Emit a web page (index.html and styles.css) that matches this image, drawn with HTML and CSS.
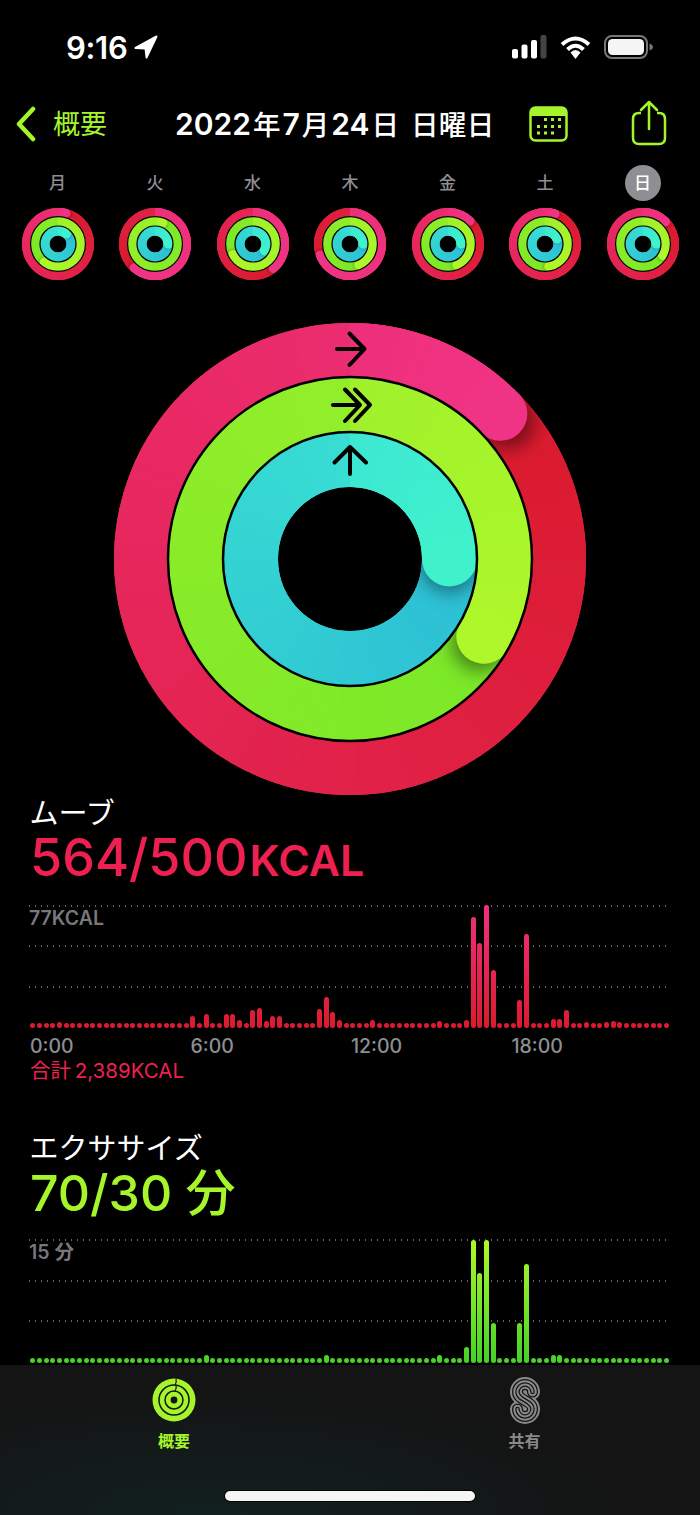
FILE: index.html
```html
<!DOCTYPE html>
<html lang="ja">
<head>
    <meta charset="utf-8">
    <title>アクティビティ</title>
    <link rel="stylesheet" href="styles.css">
</head>
<body>
    <div class="status-bar">
        <span class="time">9:16</span>
        <svg class="location" width="24" height="24" viewBox="0 0 24 24"><path d="M22.500 1.500 L1.500 13 L11.500 13.500 L12.500 22.500 Z"/></svg>
        <div class="status-icons">
            <svg width="35" height="24" viewBox="0 0 35 24">
                <rect x="0" y="14" width="6" height="9.500" rx="2" fill="#fff"/>
                <rect x="9.500" y="9.500" width="6" height="14" rx="2" fill="#fff"/>
                <rect x="19" y="5" width="6" height="18.500" rx="2" fill="#fff"/>
                <rect x="28.500" y="0" width="6" height="23.500" rx="2" fill="#444"/>
            </svg>
            <svg width="31" height="24" viewBox="0 0 31 24">
                <path d="M2 9.500 Q15.500 -2.500 29 9.500" fill="none" stroke="#fff" stroke-width="4"/>
                <path d="M7.500 14.500 Q15.500 7 23.500 14.500" fill="none" stroke="#fff" stroke-width="4"/>
                <path d="M10.500 17.500 Q15.500 12.500 20.500 17.500 L15.500 24 Z" fill="#fff"/>
            </svg>
            <svg width="49" height="24" viewBox="0 0 49 24">
                <rect x="1" y="1" width="42" height="22" rx="7" fill="none" stroke="#777" stroke-width="2"/>
                <rect x="4" y="4" width="36" height="16" rx="4.500" fill="#f5f5f5"/>
                <path d="M45.500 8.500 Q49 10 49 12 Q49 14 45.500 15.500 Z" fill="#777"/>
            </svg>
        </div>
    </div>

    <div class="nav-bar">
        <svg class="back-icon" width="20" height="36" viewBox="0 0 20 36"><path d="M17 3 L3 18 L17 33" fill="none" stroke="#a6f52b" stroke-width="4.500" stroke-linecap="round" stroke-linejoin="round"/></svg>
        <span class="back-label">概要</span>
        <span class="nav-title">2022<b>年</b>7<b>月</b>24<b>日</b><b class="weekday">日曜日</b></span>
        <svg class="calendar-icon" width="39" height="36" viewBox="0 0 39 36">
            <rect x="1.500" y="1.500" width="36" height="33" rx="5" fill="none" stroke="#a6f52b" stroke-width="2.500"/>
            <path d="M1.500 10 V6 Q1.500 1.500 6 1.500 H33 Q37.500 1.500 37.500 6 V10 Z" fill="#a6f52b"/>
            <g fill="#a6f52b">
                <rect x="15" y="12" width="3" height="3"/><rect x="22" y="12" width="3" height="3"/><rect x="29" y="12" width="3" height="3"/>
                <rect x="8" y="19" width="3" height="3"/><rect x="15" y="19" width="3" height="3"/><rect x="22" y="19" width="3" height="3"/><rect x="29" y="19" width="3" height="3"/>
                <rect x="8" y="25.500" width="3" height="3"/><rect x="15" y="25.500" width="3" height="3"/><rect x="22" y="25.500" width="3" height="3"/>
            </g>
        </svg>
        <svg class="share-icon" width="36" height="46" viewBox="0 0 36 46">
            <path d="M10 13 H8 Q2 13 2 19 V38 Q2 44 8 44 H28 Q34 44 34 38 V19 Q34 13 28 13 H26" fill="none" stroke="#a6f52b" stroke-width="2.500"/>
            <path d="M18 29 V2 M10 10 L18 2 L26 10" fill="none" stroke="#a6f52b" stroke-width="2.500" stroke-linecap="round" stroke-linejoin="round"/>
        </svg>
    </div>

    <div class="week">
        <div class="day"><span class="day-label">月</span><svg class="ring-small" data-ends="15,217,40"></svg></div>
        <div class="day"><span class="day-label">火</span><svg class="ring-small" data-ends="222,20,90"></svg></div>
        <div class="day"><span class="day-label">水</span><svg class="ring-small" data-ends="141,242,120"></svg></div>
        <div class="day"><span class="day-label">木</span><svg class="ring-small" data-ends="250,157,90"></svg></div>
        <div class="day"><span class="day-label">金</span><svg class="ring-small" data-ends="44,157,90"></svg></div>
        <div class="day"><span class="day-label">土</span><svg class="ring-small" data-ends="19,170,67"></svg></div>
        <div class="day"><span class="day-label today">日</span><svg class="ring-small" data-ends="46,120,90"></svg></div>
    </div>

    <div class="hero">
        <svg id="bigRing" class="ring-big" data-ends="46,120,90"></svg>
    </div>

    <section class="metric move">
        <h2>ムーブ</h2>
        <p class="value">564/500<small>KCAL</small></p>
        <div class="plot">
            <div class="grid"><i></i><i></i><i></i></div>
            <span class="plot-max">77KCAL</span>
            <div class="bars" id="moveBars"></div>
        </div>
        <div class="axis"><span>0:00</span><span>6:00</span><span>12:00</span><span>18:00</span></div>
        <p class="total">合計 2,389KCAL</p>
    </section>

    <section class="metric exercise">
        <h2>エクササイズ</h2>
        <p class="value">70/30 分</p>
        <div class="plot">
            <div class="grid"><i></i><i></i><i></i></div>
            <span class="plot-max">15 分</span>
            <div class="bars" id="exerciseBars"></div>
        </div>
    </section>

    <div class="tab-bar">
        <div class="tab active">
            <svg width="44" height="44" viewBox="0 0 44 44">
                <circle cx="22" cy="22" r="21.500" fill="#a6f52b"/>
                <circle cx="22" cy="22" r="15" fill="none" stroke="#141414" stroke-width="1.500"/>
                <circle cx="22" cy="22" r="9" fill="none" stroke="#141414" stroke-width="1.500"/>
                <circle cx="22" cy="22" r="3.400" fill="#141414"/>
                <path d="M24 1 Q25 4 23 7 M24 7.500 Q25 10 23 13" fill="none" stroke="#141414" stroke-width="1.200"/>
            </svg>
            <span>概要</span>
        </div>
        <div class="tab">
            <svg width="30" height="47" viewBox="0 0 30 47">
                <defs>
                    <path id="shareS" d="M22.500 15 A7.500 7.500 0 0 0 7.500 15 C7.500 23.500 22.500 23.500 22.500 32 A7.500 7.500 0 0 1 7.500 32"/>
                </defs>
                <g fill="none" stroke-linecap="round">
                    <use href="#shareS" stroke="#8a8a8a" stroke-width="15"/>
                    <use href="#shareS" stroke="#141414" stroke-width="11"/>
                    <use href="#shareS" stroke="#8a8a8a" stroke-width="8.500"/>
                    <use href="#shareS" stroke="#141414" stroke-width="4.500"/>
                    <use href="#shareS" stroke="#8a8a8a" stroke-width="2"/>
                </g>
            </svg>
            <span>共有</span>
        </div>
        <div class="home-indicator"></div>
    </div>

    <script src="charts.js"></script>
</body>
</html>
```

FILE: styles.css
```css
* {
    box-sizing: border-box;
}

html, body {
    margin: 0;
    height: 1515px;
    overflow: hidden;
}

body {
    position: relative;
    background-color: #000;
    color: #fff;
    font-family: Inter, "Noto Sans CJK JP", sans-serif;
}

.status-bar {
    display: flex;
    align-items: center;
    height: 94px;
    padding-left: 66px;
}

.time {
    font-size: 31px;
    font-weight: 600;
    letter-spacing: -0.3px;
}

.location {
    margin-left: 7px;
    fill: #fff;
    stroke: #fff;
    stroke-width: 2;
    stroke-linejoin: round;
}

.status-icons {
    display: flex;
    align-items: center;
    gap: 13px;
    margin-left: auto;
    padding-right: 47px;
}

.nav-bar {
    display: flex;
    align-items: center;
    height: 60px;
    padding-left: 16px;
}

.back-label {
    margin-left: 17px;
    padding-top: 1px;
    color: #a6f52b;
    font-size: 27px;
    line-height: 34px;
}

.nav-title {
    display: flex;
    align-items: baseline;
    width: 317px;
    margin-left: 68px;
    font-size: 30px;
    font-weight: 600;
    line-height: 36px;
    white-space: nowrap;
}

.nav-title b {
    margin: 0 2px;
    font-size: 27.500px;
    font-weight: 500;
}

.nav-title .weekday {
    margin-left: 10px;
    letter-spacing: 0.5px;
}

.calendar-icon {
    margin-left: 37px;
}

.share-icon {
    margin-left: 63px;
    margin-top: -2px;
}

.week {
    display: grid;
    grid-template-columns: repeat(7, 72px);
    column-gap: 25.5px;
    padding: 11px 0 0 21.5px;
}

.day {
    display: flex;
    flex-direction: column;
    align-items: center;
    gap: 7px;
}

.day-label {
    display: flex;
    align-items: center;
    justify-content: center;
    width: 36px;
    height: 36px;
    padding-bottom: 3px;
    border-radius: 50%;
    color: #8e8e93;
    font-size: 17px;
    font-weight: 500;
}

.day-label.today {
    background-color: #8e8e93;
    color: #fff;
}

.ring-small {
    display: block;
    width: 72px;
    height: 72px;
}

.hero {
    display: flex;
    justify-content: center;
    margin-top: 43px;
}

.ring-big {
    display: block;
    width: 472px;
    height: 472px;
}

.metric {
    padding: 0 29px;
}

.metric h2 {
    height: 32px;
    margin: 0 0 0 0.500px;
    font-size: 29px;
    font-weight: 400;
    line-height: 37px;
}

.value {
    height: 62px;
    margin: 0 0 15.500px 1px;
    font-size: 52px;
    font-weight: 500;
    line-height: 62px;
    white-space: nowrap;
}

.value small {
    margin-left: 2px;
    font-size: 43px;
    font-weight: 600;
}

.move .value, .total {
    color: #ee2052;
}

.exercise {
    margin-top: 47px;
}

.exercise .value {
    color: #a6f52b;
    font-size: 50px;
}

.plot {
    position: relative;
    height: 123.5px;
}

.grid i {
    display: block;
    height: 40.5px;
    background-image: linear-gradient(to right, #666 0 1.500px, transparent 1.500px);
    background-size: 6px 1.5px;
    background-repeat: repeat-x;
}

.plot-max {
    position: absolute;
    left: 0;
    top: 3px;
    color: #77777c;
    font-size: 19.500px;
    font-weight: 600;
    line-height: 20px;
}

.bars {
    position: absolute;
    left: 1.200px;
    right: 1.500px;
    bottom: 0;
    display: flex;
    justify-content: space-between;
    align-items: flex-end;
}

.bar {
    width: 5px;
    min-height: 5px;
    border-radius: 2.500px;
    background-position: bottom;
    background-size: 100% 123px;
}

.move .bar {
    background-image: linear-gradient(to top, #dc1a2e, #f03080);
}

.exercise .bar {
    background-image: linear-gradient(to top, #43d326, #b0f72b);
}

.axis {
    display: grid;
    grid-template-columns: repeat(4, 160.500px);
    height: 20px;
    margin: 7.500px 0 0 1px;
    color: #8e8e93;
    font-size: 19.500px;
    font-weight: 500;
    line-height: 20px;
}

.total {
    height: 24px;
    margin: 3px 0 0 1px;
    font-size: 20.500px;
    line-height: 24px;
    word-spacing: -2px;
}

.tab-bar {
    position: absolute;
    left: 0;
    right: 0;
    bottom: 0;
    display: flex;
    height: 150px;
    background: radial-gradient(ellipse at 30% 100%, #122020 0, #141414 60%);
}

.tab {
    display: flex;
    flex-direction: column;
    align-items: center;
    width: 350px;
    padding-top: 11.500px;
    gap: 6px;
    margin-left: -1px;
    color: #8a8a8a;
    font-size: 16px;
    font-weight: 600;
    line-height: 22px;
}

.tab + .tab {
    margin-left: 0.500px;
}

.tab.active {
    color: #a6f52b;
}

.tab.active svg {
    margin: 1.500px 0;
}

.home-indicator {
    position: absolute;
    left: 225px;
    top: 126px;
    width: 250px;
    height: 10px;
    border-radius: 5px;
    background-color: #f5f5f5;
    box-shadow: 0 0 0 1px #000;
}
```

FILE: charts.js
```js
// rings -------------------------------------------------------------
const NS = "http://www.w3.org/2000/svg";

const COLORS = [
    { dark: [218, 26, 44], top: [238, 47, 122], cap: [240, 52, 133] },
    { dark: [122, 232, 40], top: [160, 241, 43], cap: [174, 247, 43] },
    { dark: [44, 190, 212], top: [61, 232, 210], cap: [64, 242, 204] }
];

const BIG = { radii: [236, 182, 127, 72], line: 2.5, seam: 0.6, shadow: 0.45, blur: 9 };
const SMALL = { radii: [236, 180, 118, 56], line: 8, seam: 2, shadow: 0.2, blur: 8 };

function el(parent, name, attrs) {
    let node = document.createElementNS(NS, name);
    for (let key in attrs) node.setAttribute(key, attrs[key]);
    parent.appendChild(node);
    return node;
}

function point(r, deg) {
    let a = (deg - 90) * Math.PI / 180;
    return [r * Math.cos(a), r * Math.sin(a)];
}

function arc(r, from, to) {
    let p0 = point(r, from);
    let p1 = point(r, to);
    let large = to - from > 180 ? 1 : 0;
    return "M" + p0[0] + " " + p0[1] + " A" + r + " " + r + " 0 " + large + " 1 " + p1[0] + " " + p1[1];
}

function mix(a, b, t) {
    return "rgb(" + a.map((v, i) => Math.round(v + (b[i] - v) * t)).join(",") + ")";
}

function drawRing(svg, geo, ends, id) {
    svg.setAttribute("viewBox", "-236 -236 472 472");

    let defs = el(svg, "defs", {});
    let blur = el(defs, "filter", { id: id + "b", x: "-50%", y: "-50%", width: "200%", height: "200%" });
    el(blur, "feGaussianBlur", { stdDeviation: geo.blur });

    ends.forEach(function(end, n) {
        let outer = geo.radii[n];
        let inner = geo.radii[n + 1];
        let r = (outer + inner) / 2;
        let w = outer - inner;
        let c = COLORS[n];
        let step = 4;

        // solid circle under the segments so no seams show through
        el(svg, "circle", { r: r, fill: "none", "stroke-width": w, stroke: mix(c.dark, c.top, 0.5) });

        // full circle, starts dark right after the end of the overlap
        for (let d = 0; d < 360; d += step) {
            el(svg, "path", {
                d: arc(r, end + d, end + d + step + geo.seam),
                fill: "none",
                "stroke-width": w,
                stroke: mix(c.dark, c.top, d / 360)
            });
        }

        // shadow of the cap, stays inside its own band
        let clip = el(defs, "clipPath", { id: id + "c" + n });
        let band = "M" + -outer + " 0 A" + outer + " " + outer + " 0 1 1 " + outer + " 0 A" + outer + " " + outer + " 0 1 1 " + -outer + " 0 Z " +
            "M" + -inner + " 0 A" + inner + " " + inner + " 0 1 1 " + inner + " 0 A" + inner + " " + inner + " 0 1 1 " + -inner + " 0 Z";
        el(clip, "path", { d: band, "clip-rule": "evenodd" });
        let g = el(svg, "g", { "clip-path": "url(#" + id + "c" + n + ")" });
        let sh = point(r, end + 3);
        el(g, "circle", { cx: sh[0], cy: sh[1], r: w / 2, fill: "rgba(0,0,0," + geo.shadow + ")", filter: "url(#" + id + "b)" });

        // the part over 100%
        for (let d = 0; d < end; d += step) {
            let to = Math.min(d + step + geo.seam, end);
            el(svg, "path", {
                d: arc(r, d, to),
                fill: "none",
                "stroke-width": w,
                stroke: mix(c.top, c.cap, d / end)
            });
        }
        el(svg, "path", {
            d: arc(r, end - 0.5, end),
            fill: "none",
            "stroke-width": w,
            "stroke-linecap": "round",
            stroke: mix(c.top, c.cap, 1)
        });
    });

    // black lines between the bands
    el(svg, "circle", { r: geo.radii[1], fill: "none", stroke: "#000", "stroke-width": geo.line });
    el(svg, "circle", { r: geo.radii[2], fill: "none", stroke: "#000", "stroke-width": geo.line });
}

function arrows(svg) {
    let g = el(svg, "g", {
        fill: "none",
        stroke: "#000",
        "stroke-width": 4,
        "stroke-linecap": "round",
        "stroke-linejoin": "round",
        transform: "translate(-350 -559)"
    });
    el(g, "path", { d: "M337 349 H364 M349.500 333.500 L364.500 349 L349.500 365" });
    el(g, "path", { d: "M333 405 H358 M345 389.500 L360 405 L345 421 M355 389.500 L370 405 L355 421" });
    el(g, "path", { d: "M350 474 V447 M334.500 462.500 L350 447 L366 462.500" });
}

document.querySelectorAll(".ring-small").forEach(function(svg, i) {
    drawRing(svg, SMALL, svg.dataset.ends.split(",").map(Number), "s" + i);
});

let bigRing = document.getElementById("bigRing");
drawRing(bigRing, BIG, bigRing.dataset.ends.split(",").map(Number), "big");
arrows(bigRing);

// bars: 96 quarter hours, anything not listed is just a dot ----------
const MOVE = {
    4: 6, 24: 12, 26: 14, 29: 14, 30: 14, 31: 8, 33: 18, 34: 20, 35: 7, 36: 12, 37: 12,
    43: 19, 44: 31, 45: 16, 46: 8, 51: 8, 61: 7, 65: 8, 66: 111, 67: 85, 68: 123, 69: 58,
    73: 28, 74: 94, 78: 9, 79: 9, 80: 18, 83: 6, 86: 6, 87: 7, 88: 6
};

const EXERCISE = {
    26: 8, 44: 8, 61: 8, 65: 16, 66: 123, 67: 90, 68: 123, 69: 40, 73: 40, 74: 99, 78: 8, 79: 8
};

function fillBars(id, data) {
    let box = document.getElementById(id);
    for (let i = 0; i < 96; i++) {
        let bar = document.createElement("div");
        bar.className = "bar";
        bar.style.height = (data[i] || 5) + "px";
        box.appendChild(bar);
    }
}

fillBars("moveBars", MOVE);
fillBars("exerciseBars", EXERCISE);
```
